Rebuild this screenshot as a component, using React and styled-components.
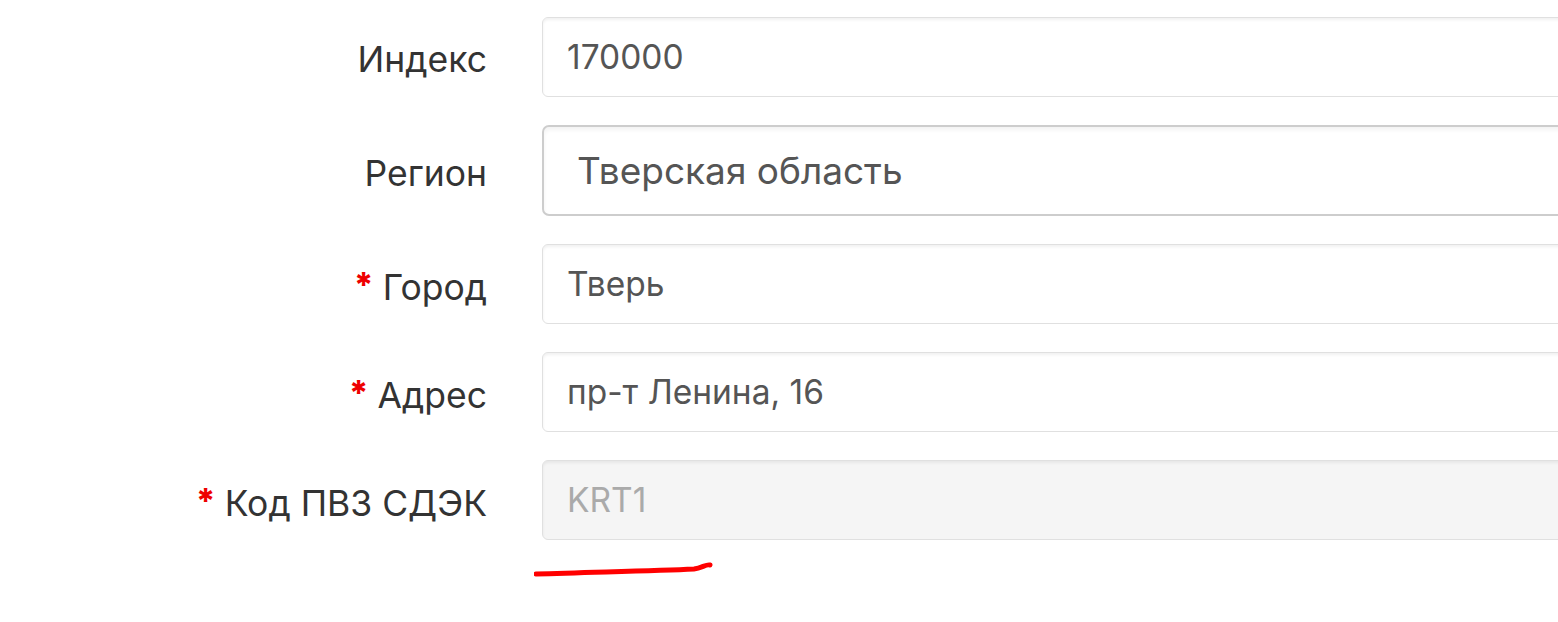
import React from 'react'
import styled, { createGlobalStyle } from 'styled-components'

const GlobalStyle = createGlobalStyle`
	body {
		margin: 0;
		background: #fff;
		overflow: hidden;
		font-family: Inter, "Noto Sans", sans-serif;
	}
`

const fields = [
	{ label: 'Индекс', value: '170000' },
	{ label: 'Регион', value: 'Тверская область', select: true },
	{ label: 'Город', value: 'Тверь', required: true },
	{ label: 'Адрес', value: 'пр-т Ленина, 16', required: true },
	{ label: 'Код ПВЗ СДЭК', value: 'KRT1', required: true, disabled: true },
]

const App = () => {
	return (
		<Page>
			<GlobalStyle />
			<Form>
				{fields.map((f) => (
					<Row key={f.label}>
						<Label>
							{f.required && <Star>*</Star>}
							{f.label}
						</Label>
						{f.select ? (
							<SelectBox>{f.value}</SelectBox>
						) : (
							<Input defaultValue={f.value} disabled={f.disabled} readOnly />
						)}
					</Row>
				))}
				<Row>
					<span />
					<Mark width="190" height="20" viewBox="0 0 190 20">
						<path d="M2 14 C 60 12, 120 11, 160 9 C 168 8, 172 4, 176 5" />
					</Mark>
				</Row>
			</Form>
		</Page>
	)
}

export default App

const Page = styled.div`
	width: 1558px;
	height: 622px;
	overflow: hidden;
	padding-top: 17px;
	box-sizing: border-box;
`

const Form = styled.div`
	width: 1620px;
	display: flex;
	flex-direction: column;
	gap: 28px;
`

const Row = styled.div`
	display: grid;
	grid-template-columns: 487px 1fr;
	column-gap: 55px;
	align-items: center;
`

const Label = styled.label`
	text-align: right;
	font-size: 35.5px;
	color: #333;
	padding-top: 5px;
	white-space: nowrap;
`

const Star = styled.span`
	color: #e00;
	font-weight: 800;
	font-size: 34px;
	vertical-align: 3px;
	margin-right: 9px;
`

const Input = styled.input`
	height: 80px;
	box-sizing: border-box;
	border: 1.5px solid #e0e0e0;
	border-radius: 6px;
	padding: 0 24px;
	font-family: inherit;
	font-size: 33.5px;
	color: #555;
	background: ${(p) => (p.disabled ? '#f5f5f5' : '#fff')};
	box-shadow: inset 0 2px 3px rgba(0, 0, 0, 0.06);
	outline: none;

	&:disabled {
		color: #aaa;
		opacity: 1;
	}
`

const SelectBox = styled.div`
	height: 91px;
	box-sizing: border-box;
	border: 2px solid #cdcdcd;
	border-radius: 7px;
	padding: 0 33px;
	display: flex;
	align-items: center;
	font-size: 37px;
	color: #555;
	box-shadow: inset 0 3px 4px rgba(0, 0, 0, 0.05);
`

const Mark = styled.svg`
	margin: -8px 0 0 -8px;

	path {
		fill: none;
		stroke: #f00;
		stroke-width: 5;
		stroke-linecap: round;
	}
`
